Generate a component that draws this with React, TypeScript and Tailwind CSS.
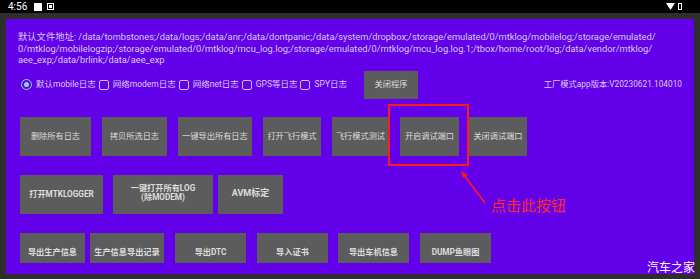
import React from 'react'

const FONT = { fontFamily: 'Roboto, "Noto Sans CJK SC", sans-serif' }

const PATH_LINES = [
  '默认文件地址: /data/tombstones;/data/logs;/data/anr;/data/dontpanic;/data/system/dropbox;/storage/emulated/0/mtklog/mobilelog;/storage/emulated/',
  '0/mtklog/mobilelogzip;/storage/emulated/0/mtklog/mcu_log.log;/storage/emulated/0/mtklog/mcu_log.log.1;/tbox/home/root/log;/data/vendor/mtklog/',
  'aee_exp;/data/brlink;/data/aee_exp',
]

function Btn({ label, className }: { label: React.ReactNode; className: string }) {
  return (
    <div
      className={
        'flex shrink-0 items-center justify-center bg-[#5c5c5c] text-center text-[8.2px] text-[#dcdcdc] ' +
        className
      }
    >
      {label}
    </div>
  )
}

function Check({ label }: { label: string }) {
  return (
    <div className="flex items-center gap-[4px]">
      <span className="h-[10px] w-[10px] rounded-[2px] border-[1.5px] border-[#cdbdf2]" />
      <span>{label}</span>
    </div>
  )
}

export default function App() {
  return (
    <div className="relative h-[279px] w-[700px] overflow-hidden bg-[#2e2e2e]" style={FONT}>
      {/* status bar */}
      <div className="flex h-[13px] items-center bg-black px-[8px] text-[10px] text-white">
        <span className="leading-none">4:56</span>
        <span className="ml-[7px] h-[8px] w-[8px] bg-white" />
        <span className="ml-[5px] flex h-[7px] w-[7px] items-center justify-center border border-white">
          <span className="h-[3px] w-[3px] bg-white" />
        </span>
        <div className="ml-auto flex items-center gap-[3px] pr-[10px]">
          <svg width="9" height="7" viewBox="0 0 9 7">
            <path d="M0 0 L9 0 L4.5 7 Z" fill="white" />
          </svg>
          <span className="h-[7px] w-[4px] border border-white" />
        </div>
      </div>

      {/* main panel */}
      <div className="ml-[6px] mt-[6px] h-[255px] w-[688px] bg-[#6200ea] pl-[12px] pt-[12px] text-[#d9cbf5]">
        <div className="whitespace-nowrap text-[9.3px] leading-[11.5px]">
          {PATH_LINES.map((l) => (
            <p key={l}>{l}</p>
          ))}
        </div>

        <div className="mt-[5px] flex h-[28px] items-center text-[8.5px]">
          <div className="flex items-center gap-[4px] pl-[3px]">
            <span className="flex h-[11px] w-[11px] items-center justify-center rounded-full border-[1.5px] border-[#8fd6d0]">
              <span className="h-[5px] w-[5px] rounded-full bg-[#8fd6d0]" />
            </span>
            <span>默认mobile日志</span>
          </div>
          <div className="ml-[3px] flex items-center gap-[3px]">
            <Check label="网络modem日志" />
            <Check label="网络net日志" />
            <Check label="GPS等日志" />
            <Check label="SPY日志" />
          </div>
          <Btn label="关闭程序" className="ml-[17px] h-[28px] w-[54px]" />
          <span className="ml-auto pr-[12px] text-[8.3px]">工厂模式app版本:V20230621.104010</span>
        </div>

        <div className="ml-[2px] mt-[18px] flex h-[39px]">
          <Btn label="删除所有日志" className="w-[71px]" />
          <Btn label="拷贝所选日志" className="ml-[11px] w-[65px]" />
          <Btn label="一键导出所有日志" className="ml-[11px] w-[74px]" />
          <Btn label="打开飞行模式" className="ml-[11px] w-[58px]" />
          <Btn label="飞行模式测试" className="ml-[11px] w-[57px]" />
          <Btn label="开启调试端口" className="ml-[11px] w-[59px]" />
          <Btn label="关闭调试端口" className="ml-[10px] w-[58px]" />
        </div>

        <div className="ml-[2px] mt-[19px] flex h-[39px] font-bold">
          <Btn label="打开MTKLOGGER" className="w-[83px] text-[7px]" />
          <Btn
            label={
              <span className="leading-[9px]">
                一键打开所有LOG
                <br />
                (除MODEM)
              </span>
            }
            className="ml-[10px] w-[100px] pb-[3px] text-[7px]"
          />
          <Btn label="AVM标定" className="ml-[5px] w-[65px] text-[9px]" />
        </div>

        <div className="ml-[2px] mt-[19px] flex h-[30px] font-bold">
          <Btn label="导出生产信息" className="w-[65px] pt-[10px]" />
          <Btn label="生产信息导出记录" className="ml-[5px] w-[74px] pt-[10px]" />
          <Btn label="导出DTC" className="ml-[11px] w-[71px] pt-[10px]" />
          <Btn label="导入证书" className="ml-[11px] w-[71px] pt-[10px]" />
          <Btn label="导出车机信息" className="ml-[10px] w-[71px] pt-[10px]" />
          <Btn label="DUMP鱼眼图" className="ml-[11px] w-[71px] pt-[10px]" />
        </div>
      </div>

      {/* annotations */}
      <div className="absolute left-[388px] top-[104px] h-[62px] w-[81px] border-2 border-[#ff1a1a]" />
      <svg className="absolute left-0 top-0" width="700" height="279">
        <line x1="485" y1="203" x2="464" y2="175" stroke="#ff1a1a" strokeWidth="1.5" />
        <path d="M461 171 L468 175 L463 178 Z" fill="#ff1a1a" />
      </svg>
      <span className="absolute left-[491px] top-[199px] text-[15px] leading-none text-[#ff2a2a]">点击此按钮</span>
      <span className="absolute left-[647px] top-[262px] text-[12px] leading-none text-white">汽车之家</span>
    </div>
  )
}
